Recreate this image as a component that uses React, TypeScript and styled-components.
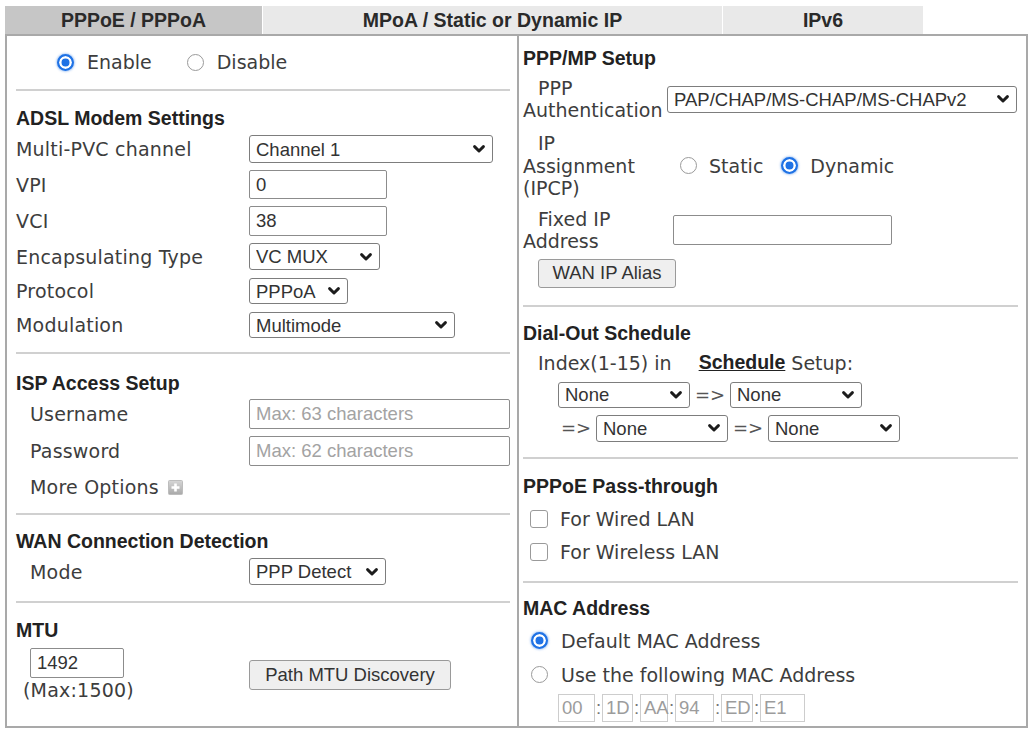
import styled, { createGlobalStyle } from "styled-components";

const ARIAL = `"Liberation Sans", Arial, sans-serif`;

const GlobalStyle = createGlobalStyle`
  * { box-sizing: border-box; }
  body {
    margin: 0;
    background: #fff;
    font-family: "DejaVu Sans", Verdana, sans-serif;
    font-size: 19px;
    color: #3d3d3d;
  }
`;

const Page = styled.div`
  width: 1023px;
  margin: 6px 0 0 5px;
`;

const TabBar = styled.div`
  display: flex;
  height: 28px;
`;

const Tab = styled.div<{ $active?: boolean; $width: number }>`
  width: ${(p) => p.$width}px;
  display: flex;
  align-items: center;
  justify-content: center;
  background: ${(p) => (p.$active ? "#c6c6c6" : "#e9e9e9")};
  font: bold 19.5px ${ARIAL};
  color: #2a2a2a;

  & + & {
    border-left: 1px solid #fff;
  }
`;

const Panel = styled.div`
  display: grid;
  grid-template-columns: 512px 1fr;
  height: 694px;
  border: 2px solid #a9a9a9;
`;

const Column = styled.div<{ $left?: boolean }>`
  display: flex;
  flex-direction: column;
  padding: ${(p) => (p.$left ? "0 7px 0 9px" : "0 8px 0 4px")};
  border-right: ${(p) => (p.$left ? "2px solid #a9a9a9" : "none")};
`;

const Divider = styled.div<{ $mt: number }>`
  margin-top: ${(p) => p.$mt}px;
  height: 2px;
  background: #d0d0d0;
`;

const Heading = styled.div<{ $mt: number }>`
  margin-top: ${(p) => p.$mt}px;
  font: bold 19.5px/24px ${ARIAL};
  color: #222;
`;

const Label = styled.span`
  white-space: nowrap;
  letter-spacing: 0.2px;
`;

// left column: label + control on a fixed grid line
const FieldRow = styled.div<{ $mt: number; $h: number; $indent?: number }>`
  display: grid;
  grid-template-columns: ${(p) => 233 - (p.$indent ?? 0)}px auto;
  align-items: center;
  height: ${(p) => p.$h}px;
  margin-top: ${(p) => p.$mt}px;
  padding-left: ${(p) => p.$indent ?? 0}px;
`;

const StatusRow = styled.div`
  display: flex;
  align-items: center;
  gap: 35px;
  height: 30px;
  margin-top: 11px;
  padding-left: 41px;
`;

const Choice = styled.label<{ $gap?: number }>`
  display: inline-flex;
  align-items: center;
  gap: ${(p) => p.$gap ?? 13}px;
  white-space: nowrap;
`;

const Radio = styled.input.attrs({ type: "radio" })`
  appearance: none;
  margin: 0;
  width: 17px;
  height: 17px;
  flex-shrink: 0;
  border-radius: 50%;
  border: 1.5px solid #9a9a9a;
  background: #fff;

  &:checked {
    border: 2px solid #1f72e5;
    background: #1f72e5;
    box-shadow: inset 0 0 0 2.5px #fff, 0 0 2px 1px rgba(40, 120, 230, 0.35);
  }
`;

const Checkbox = styled.input.attrs({ type: "checkbox" })`
  appearance: none;
  margin: 0;
  width: 18px;
  height: 18px;
  flex-shrink: 0;
  border: 1.5px solid #9a9a9a;
  border-radius: 3px;
  background: #fff;
`;

const TextBox = styled.input<{ $w: number; $h?: number }>`
  width: ${(p) => p.$w}px;
  height: ${(p) => p.$h ?? 30}px;
  margin: 0;
  padding: 0 6px;
  border: 1px solid #8c8c8c;
  border-radius: 2px;
  font: 18.5px ${ARIAL};
  color: #333;
  outline: none;

  &::placeholder {
    color: #a3a3a3;
  }
`;

const SelectWrap = styled.div<{ $w: number; $h: number }>`
  position: relative;
  width: ${(p) => p.$w}px;
  height: ${(p) => p.$h}px;
`;

const NativeSelect = styled.select`
  appearance: none;
  width: 100%;
  height: 100%;
  margin: 0;
  padding: 0 0 0 6px;
  border: 1px solid #7d7d7d;
  border-radius: 3px;
  background: #fff;
  font: 18.5px ${ARIAL};
  color: #333;
  outline: none;
`;

const Chevron = styled.svg`
  position: absolute;
  right: 8px;
  top: 50%;
  margin-top: -4px;
  pointer-events: none;
`;

const Button = styled.button<{ $w: number; $h?: number }>`
  width: ${(p) => p.$w}px;
  height: ${(p) => p.$h ?? 30}px;
  margin: 0;
  padding: 0;
  background: #efefef;
  border: 1px solid #9a9a9a;
  border-radius: 3px;
  font: 18.5px ${ARIAL};
  color: #333;
`;

const MoreRow = styled.div`
  display: flex;
  align-items: center;
  gap: 9px;
  height: 24px;
  margin-top: 9px;
  padding-left: 14px;
`;

const MtuBlock = styled.div`
  display: grid;
  grid-template-columns: 233px auto;
  align-items: center;
  margin-top: 6px;
`;

const MtuValue = styled.div`
  display: flex;
  flex-direction: column;
  align-items: flex-start;
  padding-left: 7px;
  line-height: 24px;

  input {
    margin-left: 7px;
  }
`;

// right column rows with wrapped labels
const SetupRow = styled.div<{ $mt: number }>`
  display: grid;
  grid-template-columns: 144px auto;
  align-items: center;
  margin-top: ${(p) => p.$mt}px;
`;

const WrapLabel = styled.div<{ $lh: number }>`
  line-height: ${(p) => p.$lh}px;
  text-indent: 15px;
`;

const Inline = styled.div<{ $ml: number; $gap?: number }>`
  display: flex;
  align-items: center;
  gap: ${(p) => p.$gap ?? 0}px;
  margin-left: ${(p) => p.$ml}px;
`;

const PlainRow = styled.div<{ $mt: number; $indent: number; $h?: number; $gap?: number }>`
  display: flex;
  align-items: center;
  gap: ${(p) => p.$gap ?? 0}px;
  height: ${(p) => (p.$h ? `${p.$h}px` : "auto")};
  margin-top: ${(p) => p.$mt}px;
  padding-left: ${(p) => p.$indent}px;
  line-height: 24px;
  white-space: nowrap;
`;

const ScheduleLink = styled.a`
  margin-left: 27px;
  font: bold 19.5px ${ARIAL};
  color: #222;
  text-decoration: underline;
`;

const Arrow = styled.span`
  width: 32px;
  text-align: center;
  font-size: 18px;
  color: #555;
`;

const MacBox = styled.span<{ $w: number }>`
  display: inline-flex;
  align-items: center;
  width: ${(p) => p.$w}px;
  height: 28px;
  padding-left: 3px;
  border: 1px solid #cdcdcd;
  font: 18.5px ${ARIAL};
  color: #9c9c9c;
`;

const Colon = styled.span`
  width: 7px;
  text-align: center;
  font: 18.5px ${ARIAL};
  color: #777;
`;

function Select({ w, h = 27, value }: { w: number; h?: number; value: string }) {
  return (
    <SelectWrap $w={w} $h={h}>
      <NativeSelect defaultValue={value}>
        <option>{value}</option>
      </NativeSelect>
      <Chevron width="12" height="8" viewBox="0 0 12 8">
        <path d="M1.6 1.6 L6 6 L10.4 1.6" stroke="#1c1c1c" strokeWidth="2.9" fill="none" strokeLinecap="round" strokeLinejoin="round" />
      </Chevron>
    </SelectWrap>
  );
}

function PlusIcon() {
  return (
    <svg width="15" height="15" viewBox="0 0 15 15">
      <defs>
        <linearGradient id="plusBg" x1="0" y1="0" x2="0" y2="1">
          <stop offset="0" stopColor="#d6d6d6" />
          <stop offset="1" stopColor="#a9a9a9" />
        </linearGradient>
      </defs>
      <rect x="0.5" y="0.5" width="14" height="14" rx="1" fill="url(#plusBg)" stroke="#bdbdbd" />
      <path d="M7.5 3.5 V11.5 M3.5 7.5 H11.5" stroke="#fff" strokeWidth="2.6" />
    </svg>
  );
}

const macParts = [
  { v: "00", w: 37 },
  { v: "1D", w: 31 },
  { v: "AA", w: 28 },
  { v: "94", w: 39 },
  { v: "ED", w: 32 },
  { v: "E1", w: 45 },
];

export default function App() {
  return (
    <Page>
      <GlobalStyle />
      <TabBar>
        <Tab $active $width={257}>PPPoE / PPPoA</Tab>
        <Tab $width={460}>MPoA / Static or Dynamic IP</Tab>
        <Tab $width={201}>IPv6</Tab>
      </TabBar>

      <Panel>
        <Column $left>
          <StatusRow>
            <Choice><Radio name="state" defaultChecked />Enable</Choice>
            <Choice><Radio name="state" />Disable</Choice>
          </StatusRow>
          <Divider $mt={12} />

          <Heading $mt={15}>ADSL Modem Settings</Heading>
          <FieldRow $mt={5} $h={28}>
            <Label>Multi-PVC channel</Label>
            <Select w={244} h={28} value="Channel 1" />
          </FieldRow>
          <FieldRow $mt={7} $h={29}>
            <Label>VPI</Label>
            <TextBox $w={138} $h={29} defaultValue="0" />
          </FieldRow>
          <FieldRow $mt={7} $h={30}>
            <Label>VCI</Label>
            <TextBox $w={138} defaultValue="38" />
          </FieldRow>
          <FieldRow $mt={7} $h={27}>
            <Label>Encapsulating Type</Label>
            <Select w={131} value="VC MUX" />
          </FieldRow>
          <FieldRow $mt={8} $h={26}>
            <Label>Protocol</Label>
            <Select w={99} h={26} value="PPPoA" />
          </FieldRow>
          <FieldRow $mt={8} $h={26}>
            <Label>Modulation</Label>
            <Select w={206} h={26} value="Multimode" />
          </FieldRow>
          <Divider $mt={14} />

          <Heading $mt={17}>ISP Access Setup</Heading>
          <FieldRow $mt={4} $h={30} $indent={14}>
            <Label>Username</Label>
            <TextBox $w={261} placeholder="Max: 63 characters" />
          </FieldRow>
          <FieldRow $mt={7} $h={30} $indent={14}>
            <Label>Password</Label>
            <TextBox $w={261} placeholder="Max: 62 characters" />
          </FieldRow>
          <MoreRow>
            <Label>More Options</Label>
            <PlusIcon />
          </MoreRow>
          <Divider $mt={14} />

          <Heading $mt={14}>WAN Connection Detection</Heading>
          <FieldRow $mt={5} $h={27} $indent={14}>
            <Label>Mode</Label>
            <Select w={137} value="PPP Detect" />
          </FieldRow>
          <Divider $mt={16} />

          <Heading $mt={15}>MTU</Heading>
          <MtuBlock>
            <MtuValue>
              <TextBox $w={94} defaultValue="1492" />
              <Label>(Max:1500)</Label>
            </MtuValue>
            <Button $w={202}>Path MTU Discovery</Button>
          </MtuBlock>
        </Column>

        <Column>
          <Heading $mt={10}>PPP/MP Setup</Heading>
          <SetupRow $mt={7}>
            <WrapLabel $lh={22}>PPP<br />Authentication</WrapLabel>
            <Select w={350} value="PAP/CHAP/MS-CHAP/MS-CHAPv2" />
          </SetupRow>
          <SetupRow $mt={11}>
            <WrapLabel $lh={22.5}>IP<br />Assignment<br />(IPCP)</WrapLabel>
            <Inline $ml={13} $gap={18}>
              <Choice $gap={12}><Radio name="ipcp" />Static</Choice>
              <Choice $gap={12}><Radio name="ipcp" defaultChecked />Dynamic</Choice>
            </Inline>
          </SetupRow>
          <SetupRow $mt={8}>
            <WrapLabel $lh={22}>Fixed IP<br />Address</WrapLabel>
            <Inline $ml={6}>
              <TextBox $w={219} />
            </Inline>
          </SetupRow>
          <PlainRow $mt={7} $indent={15}>
            <Button $w={138} $h={29}>WAN IP Alias</Button>
          </PlainRow>
          <Divider $mt={17} />

          <Heading $mt={14}>Dial-Out Schedule</Heading>
          <PlainRow $mt={6} $indent={15}>
            Index(1-15) in<ScheduleLink>Schedule</ScheduleLink>&nbsp;Setup:
          </PlainRow>
          <PlainRow $mt={7} $indent={35} $gap={4}>
            <Select w={132} h={26} value="None" />
            <Arrow>=&gt;</Arrow>
            <Select w={132} h={26} value="None" />
          </PlainRow>
          <PlainRow $mt={7} $indent={37} $gap={4}>
            <Arrow>=&gt;</Arrow>
            <Select w={132} value="None" />
            <Arrow>=&gt;</Arrow>
            <Select w={132} value="None" />
          </PlainRow>
          <Divider $mt={15} />

          <Heading $mt={15}>PPPoE Pass-through</Heading>
          <PlainRow $mt={8} $indent={7} $h={26}>
            <Choice $gap={12}><Checkbox />For Wired LAN</Choice>
          </PlainRow>
          <PlainRow $mt={7} $indent={7} $h={26}>
            <Choice $gap={12}><Checkbox />For Wireless LAN</Choice>
          </PlainRow>
          <Divider $mt={16} />

          <Heading $mt={13}>MAC Address</Heading>
          <PlainRow $mt={8} $indent={8} $h={26}>
            <Choice $gap={13}><Radio name="mac" defaultChecked />Default MAC Address</Choice>
          </PlainRow>
          <PlainRow $mt={8} $indent={8} $h={26}>
            <Choice $gap={13}><Radio name="mac" />Use the following MAC Address</Choice>
          </PlainRow>
          <PlainRow $mt={6} $indent={35} $h={28}>
            {macParts.map((m, i) => (
              <span key={m.v} style={{ display: "contents" }}>
                {i > 0 && <Colon>:</Colon>}
                <MacBox $w={m.w}>{m.v}</MacBox>
              </span>
            ))}
          </PlainRow>
        </Column>
      </Panel>
    </Page>
  );
}
